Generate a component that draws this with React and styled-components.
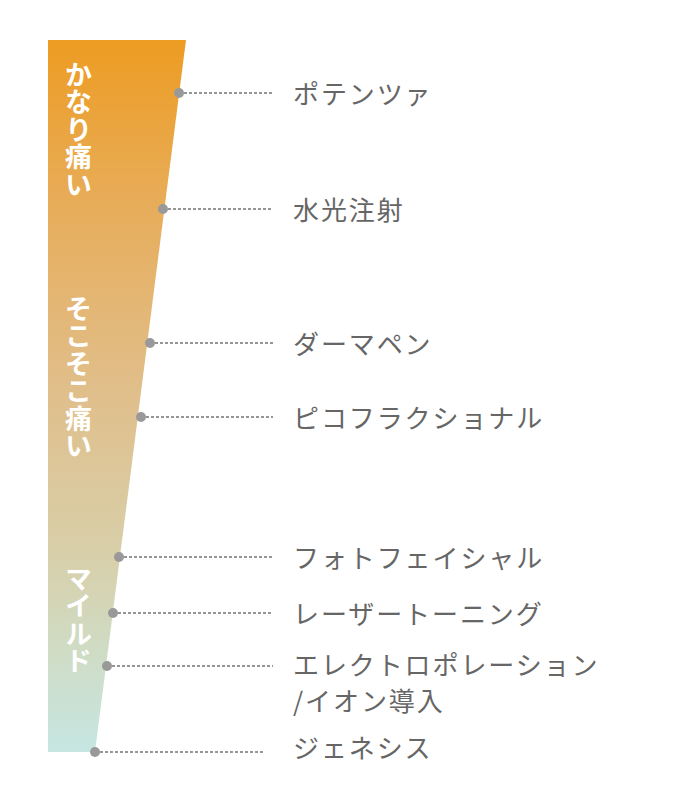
import React from "react";
import styled, { createGlobalStyle } from "styled-components";

const Global = createGlobalStyle`
  html, body { margin: 0; padding: 0; background: #fff; }
  body { font-family: "Noto Sans CJK JP", "Noto Sans", sans-serif; }
`;

const Page = styled.div`
  padding: 40px 0 40px 48px;
  width: 680px;
  box-sizing: border-box;
`;

const Stage = styled.div`
  display: grid;
  grid-template-areas: "stack";
  width: 600px;
`;

const Funnel = styled.div`
  grid-area: stack;
  z-index: 0;
  width: 138px;
  height: 712px;
  clip-path: polygon(0 0, 100% 0, 47px 100%, 0 100%);
  background: linear-gradient(
    to bottom,
    #ed9c22 0%,
    #e7ae5e 25%,
    #e0bf8c 50%,
    #d8cfa9 72%,
    #cfdcc5 86%,
    #c6e6e2 100%
  );
`;

const LevelColumn = styled.div`
  grid-area: stack;
  z-index: 1;
  display: flex;
  flex-direction: column;
  align-items: flex-start;
  padding-left: 16px;
`;

const Level = styled.div`
  writing-mode: vertical-rl;
  margin-top: ${(p) => p.$top}px;
  font-size: 27px;
  line-height: 28px;
  font-weight: 700;
  letter-spacing: 0.5px;
  color: #fff;
`;

const Rows = styled.div`
  grid-area: stack;
  z-index: 2;
  display: flex;
  flex-direction: column;
`;

const Row = styled.div`
  display: grid;
  grid-template-columns: 245px 1fr;
  margin-top: ${(p) => p.$top}px;
`;

const Connector = styled.div`
  display: flex;
  align-items: center;
  height: 36px;
  padding-left: ${(p) => p.$left}px;
  padding-right: ${(p) => p.$right}px;
`;

const Dot = styled.span`
  flex: 0 0 10px;
  width: 10px;
  height: 10px;
  border-radius: 50%;
  background: #999;
`;

const Dash = styled.span`
  flex: 1;
  height: 2px;
  background: repeating-linear-gradient(
    to right,
    #959595 0 3px,
    transparent 3px 5px
  );
`;

const Label = styled.div`
  font-size: 26px;
  line-height: 36px;
  letter-spacing: 1.9px;
  color: #666;
  white-space: nowrap;
  margin-top: ${(p) => p.$shift || 0}px;
`;

const levels = [
  { text: "かなり痛い", top: 21 },
  { text: "そこそこ痛い", top: 96 },
  { text: "マイルド", top: 105 },
];

const items = [
  { lines: ["ポテンツァ"], top: 35, dot: 179, end: 273 },
  { lines: ["水光注射"], top: 80, dot: 163, end: 273 },
  { lines: ["ダーマペン"], top: 98, dot: 150, end: 273 },
  { lines: ["ピコフラクショナル"], top: 38, dot: 141, end: 273 },
  { lines: ["フォトフェイシャル"], top: 104, dot: 119, end: 273 },
  { lines: ["レーザートーニング"], top: 20, dot: 113, end: 273 },
  { lines: ["エレクトロポレーション", "/イオン導入"], top: 17, dot: 107, end: 273, shift: -2 },
  { lines: ["ジェネシス"], top: 16, dot: 95, end: 265, shift: -5 },
];

export default function App() {
  return (
    <>
      <Global />
      <Page>
        <Stage>
          <Funnel />
          <LevelColumn>
            {levels.map((l) => (
              <Level key={l.text} $top={l.top}>
                {l.text}
              </Level>
            ))}
          </LevelColumn>
          <Rows>
            {items.map((it) => (
              <Row key={it.lines[0]} $top={it.top}>
                <Connector $left={it.dot - 5 - 48} $right={293 - it.end}>
                  <Dot />
                  <Dash />
                </Connector>
                <Label $shift={it.shift}>
                  {it.lines.map((ln, i) => (
                    <React.Fragment key={ln}>
                      {i > 0 && <br />}
                      {ln}
                    </React.Fragment>
                  ))}
                </Label>
              </Row>
            ))}
          </Rows>
        </Stage>
      </Page>
    </>
  );
}
